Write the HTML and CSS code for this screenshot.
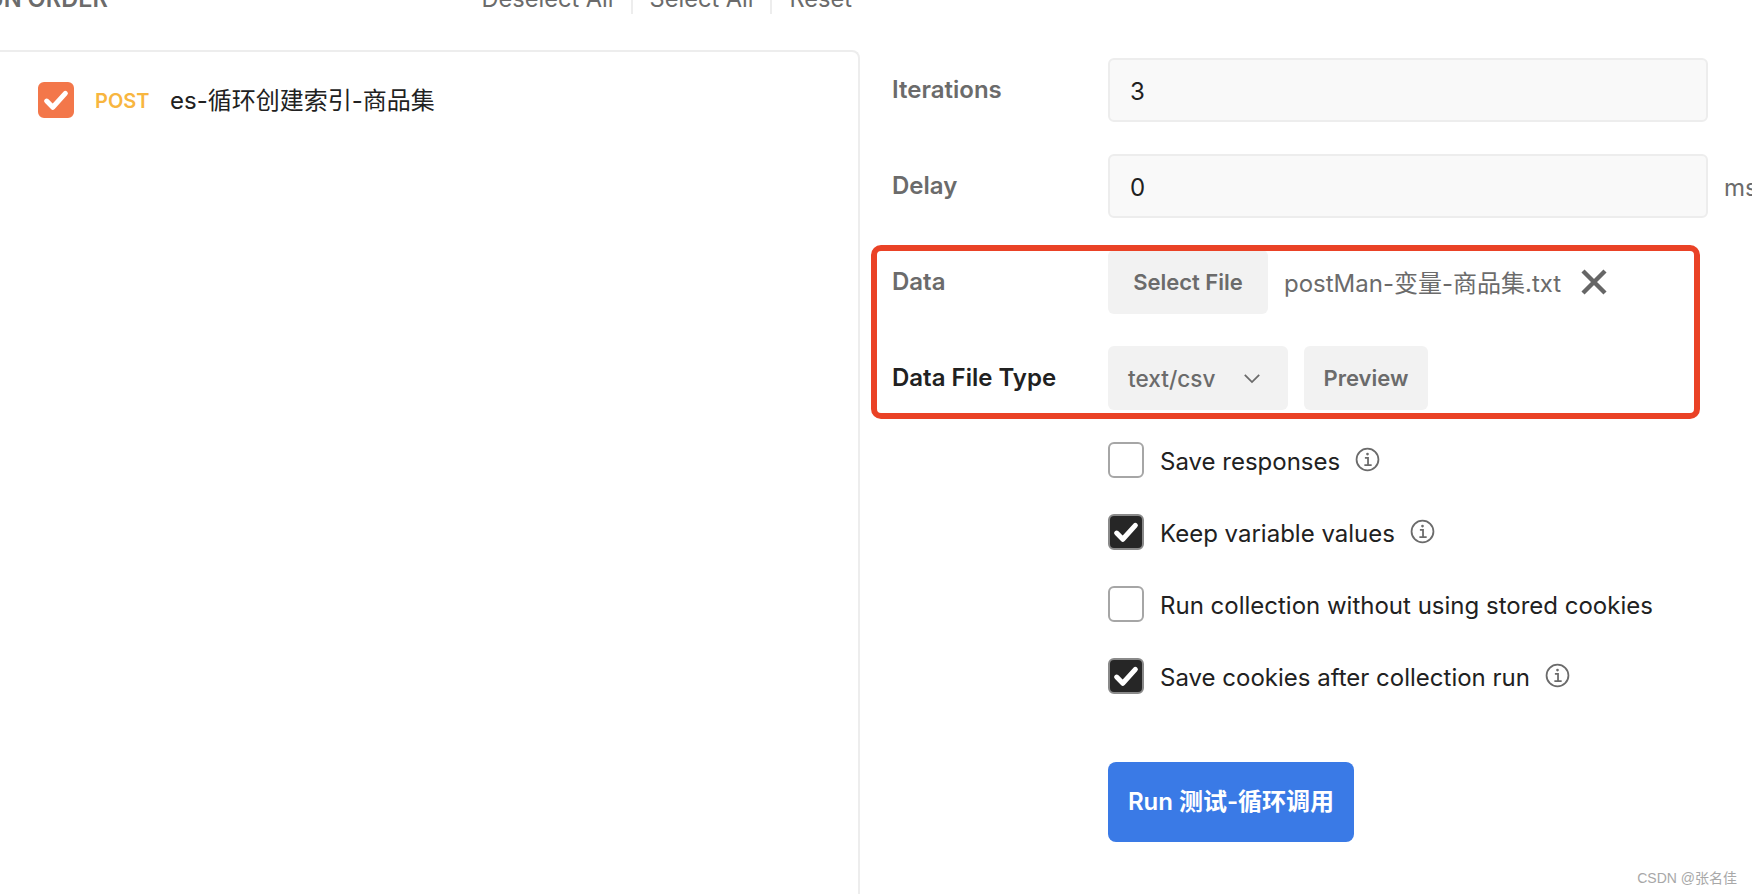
FILE: index.html
```html
<!DOCTYPE html>
<html lang="en">
<head>
<meta charset="utf-8">
<title>Collection Runner</title>
<link rel="stylesheet" href="styles.css">
</head>
<body>
<div class="page">
  <section class="order">
    <header class="order-head">
      <span class="order-title">RUN ORDER</span>
      <nav class="order-actions">
        <span class="action">Deselect All</span>
        <span class="action">Select All</span>
        <span class="action">Reset</span>
      </nav>
    </header>
    <div class="order-list">
      <div class="request">
        <span class="check check-orange"><svg viewBox="0 0 24 24" class="tick"><path d="M5 12.8l4.6 4.6L19 7"/></svg></span>
        <span class="method">POST</span>
        <span class="request-name">es-循环创建索引-商品集</span>
      </div>
    </div>
  </section>
  <section class="settings">
    <div class="row">
      <label class="label">Iterations</label>
      <div class="input">3</div>
    </div>
    <div class="row">
      <label class="label">Delay</label>
      <div class="input">0</div>
      <span class="unit">ms</span>
    </div>
    <div class="row">
      <label class="label">Data</label>
      <span class="btn btn-file">Select File</span>
      <span class="file-name">postMan-变量-商品集.txt</span>
      <svg class="close" viewBox="0 0 28 28"><path d="M3 3l22 22M25 3L3 25"/></svg>
    </div>
    <div class="row">
      <label class="label label-strong">Data File Type</label>
      <span class="btn btn-select">text/csv<svg class="chev" viewBox="0 0 20 12"><path d="M2 2l8 8 8-8"/></svg></span>
      <span class="btn btn-preview">Preview</span>
    </div>
    <div class="options">
      <div class="option">
        <span class="check"></span><span>Save responses</span>
        <svg class="info" viewBox="0 0 24 24"><circle cx="12" cy="12" r="10.5"/><path d="M9.5 10.5H12.5V17M9 17.5H16"/><circle class="dot" cx="12" cy="6.8" r="1.3"/></svg>
      </div>
      <div class="option">
        <span class="check check-dark"><svg viewBox="0 0 24 24" class="tick"><path d="M5 12.8l4.6 4.6L19 7"/></svg></span><span>Keep variable values</span>
        <svg class="info" viewBox="0 0 24 24"><circle cx="12" cy="12" r="10.5"/><path d="M9.5 10.5H12.5V17M9 17.5H16"/><circle class="dot" cx="12" cy="6.8" r="1.3"/></svg>
      </div>
      <div class="option">
        <span class="check"></span><span>Run collection without using stored cookies</span>
      </div>
      <div class="option">
        <span class="check check-dark"><svg viewBox="0 0 24 24" class="tick"><path d="M5 12.8l4.6 4.6L19 7"/></svg></span><span>Save cookies after collection run</span>
        <svg class="info" viewBox="0 0 24 24"><circle cx="12" cy="12" r="10.5"/><path d="M9.5 10.5H12.5V17M9 17.5H16"/><circle class="dot" cx="12" cy="6.8" r="1.3"/></svg>
      </div>
    </div>
    <div class="run">Run 测试-循环调用</div>
  </section>
  <div class="highlight"></div>
  <div class="watermark">CSDN @张名佳</div>
</div>
</body>
</html>
```
FILE: styles.css
```css
* { box-sizing: border-box; }
html, body { margin: 0; height: 100%; }
body { background: #fff; overflow: hidden; font-family: Inter, "Noto Sans CJK SC", sans-serif; color: #212121; }
.page { position: relative; width: 1752px; height: 894px; display: flex; overflow: hidden; }

.order { width: 860px; flex: none; display: flex; flex-direction: column; }
.order-head { height: 60px; margin-top: -10px; flex: none; display: flex; justify-content: space-between; font-size: 23.6px; line-height: 24px; color: #6b6b6b; }
.order-title { font-weight: 600; margin-left: -29px; margin-top: -3px; }
.order-actions { display: flex; align-items: stretch; margin-right: 8px; height: 24px; }
.action { padding: 0 17px; border-left: 2px solid #ededed; line-height: 18px; }
.action:first-child { border-left: 0; }
.action:last-child { padding-right: 0; }
.order-list { flex: 1; margin-left: -10px; border: 2px solid #ededed; border-bottom: 0; border-top-right-radius: 8px; padding: 30px 0 0 46px; }
.request { display: flex; align-items: center; }
.method { margin-left: 21px; width: 54px; font-size: 20px; font-weight: 600; color: #f8b63f; margin-top: 2px; }
.request-name { margin-left: 21px; font-size: 24px; color: #212121; margin-top: -3px; }

.check { width: 36px; height: 36px; flex: none; border: 2px solid #a6a6a6; border-radius: 6px; display: flex; align-items: center; justify-content: center; background: #fff; }
.check-orange { background: #f3774a; border-color: #f3774a; }
.check-dark { background: #262626; border-color: #8a8a8a; }
.tick { width: 32px; height: 32px; fill: none; stroke: #fff; stroke-width: 3.8; stroke-linecap: round; stroke-linejoin: round; }

.settings { flex: 1; padding: 58px 0 0 32px; min-width: 0; }
.row { display: flex; align-items: center; height: 64px; margin-bottom: 32px; white-space: nowrap; }
.label { width: 216px; flex: none; font-size: 24px; font-weight: 600; color: #6b6b6b; margin-top: -2px; }
.label-strong { color: #212121; }
.input { width: 600px; height: 64px; flex: none; padding: 3px 20px 0; display: flex; align-items: center; font-size: 24px; background: #f9f9f9; border: 2px solid #ededed; border-radius: 6px; color: #212121; }
.unit { margin-left: 16px; font-size: 24px; color: #6b6b6b; margin-top: 3px; }
.btn { height: 64px; display: inline-flex; align-items: center; font-size: 22px; font-weight: 500; color: #6b6b6b; background: #f2f2f2; border-radius: 6px; flex: none; }
.btn-file { width: 160px; justify-content: center; font-weight: 600; }
.file-name { margin-left: 16px; font-size: 24px; color: #6b6b6b; margin-top: -1px; }
.close { width: 28px; height: 28px; margin-left: 19px; fill: none; stroke: #666; stroke-width: 4.4; }
.btn-select { width: 180px; padding-left: 20px; justify-content: space-between; padding-right: 27px; font-size: 22.6px; }
.chev { width: 18px; height: 11px; fill: none; stroke: #6b6b6b; stroke-width: 2; }
.btn-preview { width: 124px; margin-left: 16px; justify-content: center; font-weight: 600; }

.options { margin-left: 216px; }
.option { display: flex; align-items: center; height: 36px; margin-bottom: 36px; font-size: 24px; color: #212121; white-space: nowrap; }
.option > span:nth-child(2) { margin-left: 16px; margin-top: 2px; }
.info { width: 25px; height: 25px; margin-left: 15px; margin-top: -1px; fill: none; stroke: #6b6b6b; stroke-width: 1.7; }
.dot { fill: #6b6b6b; stroke: none; }

.run { width: 246px; height: 80px; margin-left: 216px; margin-top: 68px; padding-bottom: 5px; display: flex; align-items: center; justify-content: center; background: #3a7ae6; border-radius: 8px; color: #fff; font-size: 24px; font-weight: 600; white-space: nowrap; }

.highlight { position: absolute; left: 871px; top: 245px; width: 829px; height: 174px; border: 6px solid #ea4226; border-radius: 10px; }
.watermark { position: absolute; right: 15px; bottom: 7px; font-size: 14px; color: #a8a8a8; font-family: "Liberation Sans", "Noto Sans CJK SC", sans-serif; }
```
